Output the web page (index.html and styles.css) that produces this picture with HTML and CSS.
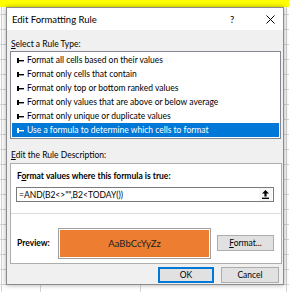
FILE: index.html
```html
<!DOCTYPE html>
<html lang="en">

<head>
  <meta charset="UTF-8" />
  <meta name="viewport" content="width=device-width, initial-scale=1.0" />
  <title>Edit Formatting Rule</title>
  <link rel="stylesheet" href="styles.css">
</head>

<body>
  <div class="dialog">
    <div class="titlebar">
      <span class="title">Edit Formatting Rule</span>
      <span class="help">?</span>
      <span class="close">
        <svg width="9" height="9" viewBox="0 0 9 9">
          <path d="M0.5 0.5 L8.5 8.5 M8.5 0.5 L0.5 8.5" stroke="#000" stroke-width="1" fill="none" />
        </svg>
      </span>
    </div>

    <div class="content">
      <div class="label"><u>S</u>elect a Rule Type:</div>
      <ul class="rule-list">
        <li><svg class="arrow" width="7" height="5" viewBox="0 0 7 5"><rect x="0" y="0" width="2" height="5" /><rect x="2" y="2" width="5" height="1.4" /></svg>Format all cells based on their values</li>
        <li><svg class="arrow" width="7" height="5" viewBox="0 0 7 5"><rect x="0" y="0" width="2" height="5" /><rect x="2" y="2" width="5" height="1.4" /></svg>Format only cells that contain</li>
        <li><svg class="arrow" width="7" height="5" viewBox="0 0 7 5"><rect x="0" y="0" width="2" height="5" /><rect x="2" y="2" width="5" height="1.4" /></svg>Format only top or bottom ranked values</li>
        <li><svg class="arrow" width="7" height="5" viewBox="0 0 7 5"><rect x="0" y="0" width="2" height="5" /><rect x="2" y="2" width="5" height="1.4" /></svg>Format only values that are above or below average</li>
        <li><svg class="arrow" width="7" height="5" viewBox="0 0 7 5"><rect x="0" y="0" width="2" height="5" /><rect x="2" y="2" width="5" height="1.4" /></svg>Format only unique or duplicate values</li>
        <li class="selected"><svg class="arrow" width="7" height="5" viewBox="0 0 7 5"><rect x="0" y="0" width="2" height="5" /><rect x="2" y="2" width="5" height="1.4" /></svg>Use a formula to determine which cells to format</li>
      </ul>

      <div class="label label-desc"><u>E</u>dit the Rule Description:</div>
      <div class="group">
        <div class="group-top">
          <div class="bold formula-label">F<u>o</u>rmat values where this formula is true:</div>
          <div class="formula">
            <span class="formula-text">=AND(B2&lt;&gt;"",B2&lt;TODAY())</span>
            <span class="collapse">
              <svg width="7" height="9" viewBox="0 0 7 9">
                <path d="M3.5 0 L7 3.5 L4.6 3.5 L4.6 6.5 L2.4 6.5 L2.4 3.5 L0 3.5 Z" fill="#000" />
                <rect x="0" y="7.6" width="7" height="1.4" fill="#000" />
              </svg>
            </span>
          </div>
        </div>
        <div class="group-bottom">
          <span class="bold preview-label">Preview:</span>
          <div class="preview">AaBbCcYyZz</div>
          <button class="btn btn-format"><u>F</u>ormat...</button>
        </div>
      </div>

      <div class="actions">
        <button class="btn btn-ok">OK</button>
        <button class="btn btn-cancel">Cancel</button>
      </div>
    </div>
  </div>
</body>

</html>
```

FILE: styles.css
```css
* {
  box-sizing: border-box;
  font-family: "Lato", "Noto Sans", sans-serif;
}

/* Sheet behind the dialog: yellow header row and gridlines */
body {
  margin: 0;
  padding: 7px 0 0 6px;
  width: 289px;
  height: 292px;
  overflow: hidden;
  color: #000;
  font-size: 8.5px;
  background-color: #fff;
  background-image:
    linear-gradient(#ffff00, #ffff00),
    linear-gradient(90deg, transparent 1px, #d4d4d4 1px, #d4d4d4 2px, transparent 2px),
    linear-gradient(90deg, transparent 286px, #d4d4d4 286px, #d4d4d4 287px, transparent 287px),
    linear-gradient(90deg, transparent 40px, #d4d4d4 40px, #d4d4d4 41px, transparent 41px, transparent 140px, #d4d4d4 140px, #d4d4d4 141px, transparent 141px),
    repeating-linear-gradient(180deg, transparent 0, transparent 14px, #d4d4d4 14px, #d4d4d4 15px);
  background-size: 100% 7px, 100% 100%, 100% 100%, 100% 10px, 100% 100%;
  background-position: 0 0, 0 0, 0 0, 0 282px, 0 0;
  background-repeat: no-repeat, no-repeat, no-repeat, no-repeat, repeat;
}

/* Dialog frame */
.dialog {
  width: 278px;
  height: 278px;
  border: 1px solid #8c8c8c;
  background: #f0f0f0;
  box-shadow: 0 0 5px rgba(0, 0, 0, 0.35);
}

.titlebar {
  display: flex;
  align-items: center;
  height: 22px;
  padding-left: 5px;
  background: #fff;
  font-size: 9.5px;
}

.title {
  flex: 1;
}

.help {
  width: 36px;
  text-align: left;
}

.close {
  display: flex;
  width: 17px;
  padding-top: 1px;
}

.content {
  padding: 0 2px 0 3px;
}

.label {
  height: 12px;
  line-height: 12px;
  margin: 8px 0 1px 1px;
}

.label-desc {
  margin: 10px 0 2px 1px;
}

/* Rule type list */
.rule-list {
  list-style: none;
  margin: 0;
  padding: 1px;
  width: 271px;
  background: #fff;
  border: 1px solid #828790;
}

.rule-list li {
  display: flex;
  align-items: center;
  height: 14px;
  padding-left: 5px;
}

.rule-list .arrow {
  margin-right: 3px;
  fill: #000;
}

.rule-list li.selected {
  background: #0078d7;
  color: #fff;
}

.rule-list li.selected .arrow {
  fill: #fff;
}

/* Rule description */
.group {
  width: 272px;
  height: 101px;
  background: #fff;
  border: 1px solid #adadad;
}

.bold {
  font-weight: bold;
}

.group-top {
  padding: 6px 0 11px 5px;
  border-bottom: 1px solid #dcdcdc;
}

.formula-label {
  height: 12px;
  line-height: 12px;
  margin-left: 1px;
}

.formula {
  display: flex;
  align-items: center;
  width: 258px;
  height: 15px;
  margin-top: 5px;
  padding-left: 2px;
  border: 1px solid #7a7a7a;
}

.formula-text {
  flex: 1;
}

.collapse {
  display: flex;
  justify-content: center;
  align-items: center;
  width: 13px;
  height: 13px;
  margin-right: 1px;
  background: #f5f5f5;
}

.group-bottom {
  display: flex;
  align-items: center;
  height: 48px;
  padding: 13px 0 3px 6px;
}

.preview-label {
  width: 41px;
}

.preview {
  display: flex;
  justify-content: center;
  align-items: center;
  width: 153px;
  height: 31px;
  padding: 1px;
  border: 1px solid #a0a0a0;
  background: #ed7d31;
  background-clip: content-box;
  color: #222;
  font-size: 9.5px;
}

.btn {
  height: 16px;
  padding: 0;
  border: 1px solid #adadad;
  background: #e1e1e1;
  color: #000;
  font-size: 8.5px;
}

.btn-format {
  width: 57px;
  margin-left: 6px;
}

.actions {
  display: flex;
  justify-content: flex-end;
  gap: 7px;
  margin-top: 3px;
  padding-right: 2px;
}

.btn-ok {
  width: 56px;
  border: 2px solid #0078d7;
}

.btn-cancel {
  width: 58px;
}
```
